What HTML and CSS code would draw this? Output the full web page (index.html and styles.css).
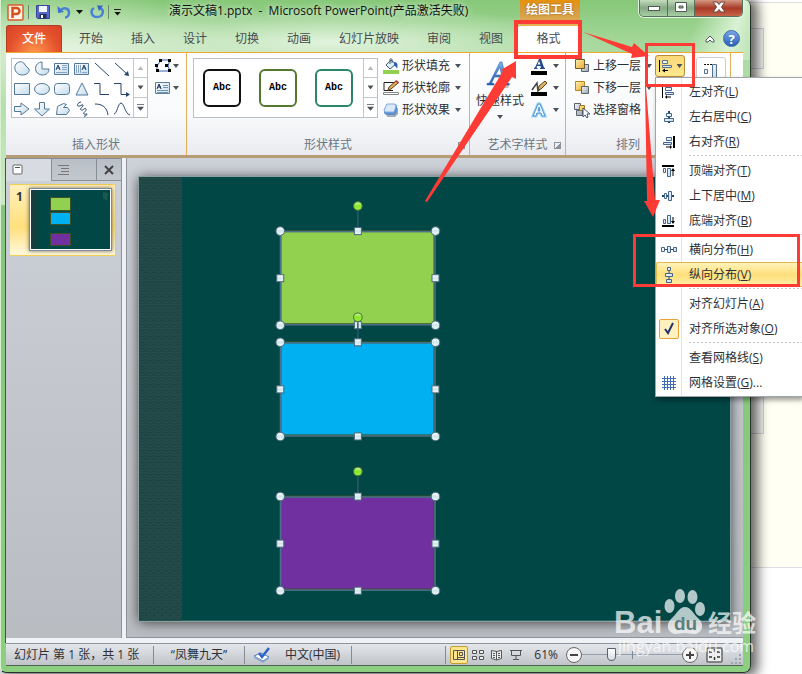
FILE: index.html
```html
<!DOCTYPE html>
<html lang="zh-CN">
<head>
<meta charset="utf-8">
<title>演示文稿1.pptx - Microsoft PowerPoint</title>
<link rel="stylesheet" href="styles.css">
</head>
<body>
<svg class="defs" aria-hidden="true">
  <defs>
    <linearGradient id="ice" x1="0" y1="0" x2="1" y2="1"><stop offset="0" stop-color="#fff"/><stop offset="1" stop-color="#c3dcec"/></linearGradient>
    <linearGradient id="gold" x1="0" y1="0" x2="1" y2="1"><stop offset="0" stop-color="#fff0b0"/><stop offset="1" stop-color="#e9a92c"/></linearGradient>
    <linearGradient id="steel" x1="0" y1="0" x2="1" y2="1"><stop offset="0" stop-color="#f4f6f8"/><stop offset="1" stop-color="#98a2ad"/></linearGradient>
    <linearGradient id="blue" x1="0" y1="0" x2="0" y2="1"><stop offset="0" stop-color="#7fb4ea"/><stop offset="1" stop-color="#1f58ad"/></linearGradient>
    <linearGradient id="lime" x1="0" y1="0" x2="0" y2="1"><stop offset="0" stop-color="#d6f8a4"/><stop offset=".5" stop-color="#85e62a"/><stop offset="1" stop-color="#a4f04c"/></linearGradient>
    <linearGradient id="knob" x1="0" y1="0" x2="0" y2="1"><stop offset="0" stop-color="#fff"/><stop offset=".5" stop-color="#cfe6ea"/><stop offset="1" stop-color="#f2fbfc"/></linearGradient>
    <pattern id="weave" width="8" height="6" patternUnits="userSpaceOnUse"><rect width="8" height="6" fill="#1e4645"/><path d="M0 1l4 1 4-1M0 4l3 1 5-1" stroke="#284e4c" fill="none"/><path d="M2 3h2M6 5h2" stroke="#183f3e"/></pattern>
    <symbol id="selection" viewBox="-8 -34 170 136" overflow="visible">
      <path d="M77.500-20V0" stroke="#2f5872" stroke-width="1.500"/>
      <rect x=".5" y=".5" width="154" height="93" fill="none" stroke="#49708c" stroke-width="1.500"/>
      <g fill="url(#knob)" stroke="#4d6b7d">
        <circle cx="0" cy="0" r="4.300"/><circle cx="155" cy="0" r="4.300"/><circle cx="0" cy="94" r="4.300"/><circle cx="155" cy="94" r="4.300"/>
        <rect x="74" y="-3.500" width="7" height="7"/><rect x="74" y="90.500" width="7" height="7"/><rect x="-3.500" y="43.500" width="7" height="7"/><rect x="151.500" y="43.500" width="7" height="7"/>
      </g>
      <circle cx="77.500" cy="-25" r="4.300" fill="url(#lime)" stroke="#4c7a35"/>
    </symbol>
  </defs>
</svg>
<div class="desktop">
  <div class="behind"><i></i><i></i></div>
  <main class="window">
    <header class="titlebar">
      <div class="quick">
        <svg width="17" height="17" viewBox="0 0 17 17"><rect x="1" y="1" width="15" height="15" rx="1" fill="#fff4ea" stroke="#d95b2b" stroke-width="1.500"/><path d="M5.500 14V4h4a2.800 2.800 0 0 1 0 6h-3" fill="none" stroke="#d8501e" stroke-width="2.500"/></svg>
        <span class="bar"></span>
        <button aria-label="保存"><svg width="14" height="14" viewBox="0 0 14 14"><path d="M.5.500h13v13h-12l-1-1z" fill="#5667c9" stroke="#38459b"/><path d="M3 1h8v6H3z" fill="#f3f6ff"/><path d="M3.500 9h7v4.500h-7z" fill="#22305f"/><path d="M5 10h2v3H5z" fill="#fff"/></svg></button>
        <button aria-label="撤消"><svg width="14" height="14" viewBox="0 0 14 14"><path d="M3 5.500c4-4 9-2 9 2 0 3-2 5-4 5" fill="none" stroke="#4a80d6" stroke-width="2.500"/><path d="M.5 1l.5 7 6-1z" fill="#3d74cf"/></svg></button>
        <i class="caret dark"></i>
        <button aria-label="恢复"><svg width="14" height="14" viewBox="0 0 14 14"><path d="M4 3C0 5 1 12 7 12s8-7 3-9" fill="none" stroke="#4b82d8" stroke-width="2.500"/><path d="M7 .5h6L9 6z" fill="#3368c2"/></svg></button>
        <span class="bar"></span>
        <span class="more"><i class="caret dark"></i></span>
      </div>
      <h1>演示文稿1.pptx&nbsp; -&nbsp; Microsoft PowerPoint(产品激活失败)</h1>
      <div class="context">绘图工具</div>
      <div class="controls">
        <button aria-label="最小化"><svg width="14" height="12"><rect x="1.500" y="5.500" width="11" height="4" fill="#fff" stroke="#4e5b52"/></svg></button>
        <button aria-label="最大化"><svg width="14" height="12"><path d="M1.500 1.500h11v9h-11zM5 5v2h4V5z" fill="#fff" fill-rule="evenodd" stroke="#4e5b52"/></svg></button>
        <button aria-label="关闭" class="close"><svg width="14" height="12"><path d="M1 1h4l2 2.500L9 1h4L9.500 6l3.500 5H9L7 8.500 5 11H1l3.500-5z" fill="#fff" stroke="#6b4640"/></svg></button>
      </div>
    </header>
    <nav class="tabs">
      <button class="file">文件</button>
      <button>开始</button><button>插入</button><button>设计</button><button>切换</button><button>动画</button><button>幻灯片放映</button><button>审阅</button><button>视图</button><button class="active">格式</button>
      <div class="help">
        <button aria-label="折叠功能区"><svg width="10" height="8"><path d="M1 5l4-4 4 4v2H7L5 5 3 7H1z" fill="#fff" stroke="#4b5d58"/></svg></button>
        <button aria-label="帮助" class="q">?</button>
      </div>
    </nav>
    <section class="ribbon">
      <div class="group insert">
        <div class="body">
          <div class="gallery">
            <div class="shapes">
              <svg viewBox="0 0 20 20"><path d="M4 5c4-4 8-2 9 1l4 4c1 4-3 6-7 6C4 16 1 9 4 5z"/></svg>
              <svg viewBox="0 0 20 20"><path d="M10 3v7h7c0 4-3 6-7 6a6.500 6.500 0 1 1 0-13z"/></svg>
              <svg viewBox="0 0 20 20"><path d="M2.500 4.500h14v11h-14z"/><path d="M4 11l2-5 2 5M5 9h3" class="ink"/><path d="M10 6.500h5M10 8.500h5M10 10.500h5M4 13.500h11" class="line"/></svg>
              <svg viewBox="0 0 20 20"><path d="M2.500 4.500h14v11h-14z"/><path d="M10 11l2-5 2 5M11 9h3" class="ink"/><path d="M4.500 6v8M6.500 6v8M8.500 6v8M10 13.500h5" class="line"/></svg>
              <svg viewBox="0 0 20 20"><path d="M3 4l14 13" class="ink"/></svg>
              <svg viewBox="0 0 20 20"><path d="M3 4l12 11" class="ink"/><path d="M17 17l-5-1 4-4z" class="solid"/></svg>
              <svg viewBox="0 0 20 20"><path d="M2.500 4.500h15v11h-15z"/></svg>
              <svg viewBox="0 0 20 20"><ellipse cx="10" cy="10" rx="7.500" ry="5.500"/></svg>
              <svg viewBox="0 0 20 20"><rect x="2.500" y="4.500" width="15" height="11" rx="3"/></svg>
              <svg viewBox="0 0 20 20"><path d="M10 4l6 12H4z"/></svg>
              <svg viewBox="0 0 20 20"><path d="M2 4.500h6v11h9" class="ink"/></svg>
              <svg viewBox="0 0 20 20"><path d="M2 4.500h7v11h7" class="ink"/><path d="M18 15.500l-4-2.500v5z" class="solid"/></svg>
              <svg viewBox="0 0 20 20"><path d="M2.500 7.500H9V4l8 6-8 6v-3.500H2.500z"/></svg>
              <svg viewBox="0 0 20 20"><path d="M7.500 3.500h5V10h5L10 17 2.500 10h5z"/></svg>
              <svg viewBox="0 0 20 20"><path d="M4.500 15.500l1-8 6-3 3 1-3 3h4l2 3-3 4z"/></svg>
              <svg viewBox="0 0 20 20"><path d="M9 3c-2 0-5 3-3 4s4-2 5-1-4 4-2 5 4-3 5-1-4 4-2 5 3-1 3 0-2 3-3 2" class="ink"/></svg>
              <svg viewBox="0 0 20 20"><path d="M3 5c7 0 12 3 13 11" class="ink"/></svg>
              <svg viewBox="0 0 20 20"><path d="M2 15C5 15 6 4 9 4s4 11 9 12" class="ink"/></svg>
            </div>
            <div class="scroll"><button aria-label="上一行"><i class="caret up"></i></button><button aria-label="下一行"><i class="caret"></i></button><button aria-label="更多"><i class="caret lined"></i></button></div>
          </div>
          <div class="stack tight">
            <button><svg width="17" height="16" viewBox="0 0 17 16"><path d="M2 8l4-6h9l-2 6 2 5H2z" fill="#fff" stroke="#2f5fb5"/><path d="M0 6h3v3H0zM4 1h3v3H4zM13 1h3v3h-3zM10 6h3v3h-3zM13 11h3v3h-3zM1 11h3v3H1z" fill="#000"/></svg><i class="caret"></i></button>
            <button><svg width="17" height="16" viewBox="0 0 17 16"><path d="M.5 2.500h14v11H.5z" fill="url(#ice)" stroke="#5d7e9d"/><path d="M2 9l2-5 2 5M3 7h3" stroke="#17294c" fill="none"/><path d="M8 5.500h5M8 7.500h5M2 10.500h11M2 12.500h11" stroke="#7494b2"/></svg><i class="caret"></i></button>
          </div>
        </div>
        <h2>插入形状</h2>
      </div>
      <div class="group styles">
        <div class="body">
          <div class="gallery">
            <div class="samples"><button class="s-black">Abc</button><button class="s-olive">Abc</button><button class="s-teal">Abc</button></div>
            <div class="scroll"><button aria-label="上一行"><i class="caret up"></i></button><button aria-label="下一行"><i class="caret"></i></button><button aria-label="更多"><i class="caret lined"></i></button></div>
          </div>
          <div class="stack">
            <button><svg width="16" height="16" viewBox="0 0 16 16"><path d="M3 7l5-5 5 4-6 5z" fill="url(#ice)" stroke="#3d5677"/><path d="M7 6V1.500c0-1 2-1 2 0V5" fill="none" stroke="#3d5677"/><path d="M11 4c4 0 4 3 3 7-1-3-2-3-3-3z" fill="#2c62ad"/><path d="M0 12h16v4H0z" fill="#92d050"/></svg>形状填充<i class="caret"></i></button>
            <button><svg width="16" height="16" viewBox="0 0 16 16"><path d="M1 2.500h11M1 2.500v8h9" fill="none" stroke="#222"/><path d="M5 10l1-3 7-6 2 2-7 6z" fill="#dfad55" stroke="#644420"/><path d="M12 1l1-1 3 2-1 2z" fill="#b43d3d"/><path d="M.5 12.500h15v2H.5z" fill="#fff" stroke="#888"/></svg>形状轮廓<i class="caret"></i></button>
            <button><svg width="16" height="16" viewBox="0 0 16 16"><path d="M3 6h12v6l-3 3H4z" fill="#a4abb5"/><path d="M1 8l3-6h9l1 2v6l-2 3H3l-2-2z" fill="#5c8fd2"/><path d="M4 2h8l1 2-2 6H2L1 8z" fill="#d9e9fa" stroke="#86aada"/></svg>形状效果<i class="caret"></i></button>
          </div>
        </div>
        <h2>形状样式</h2><i class="launch"></i>
      </div>
      <div class="group art">
        <div class="body">
          <button class="big"><svg width="30" height="34" viewBox="0 0 30 34"><path d="M17 25l9-1-3 5h-7z" fill="#999" opacity=".6"/><path d="M2 26v-1.500l2.500-.5L15 3h2l5 21 2 .5V26h-8v-1.500l2.500-.5-1.500-6H9.500l-3 6 2.500.5V26zM10.500 16h6L15 8z" fill="url(#blue)" stroke="#2a61b4" stroke-width=".6" fill-rule="evenodd"/></svg>快速样式<i class="caret"></i></button>
          <div class="stack tight">
            <button><svg width="17" height="17" viewBox="0 0 17 17"><path d="M3 11v-1l1-.5L8 1h2l3 8.500 1 .5v1H9v-1l1-.5L9.500 8H6L5.500 9.500l1 .5v1zM6.500 6.500h3L8 3z" fill="#214a8b" fill-rule="evenodd"/><path d="M0 13h16v4H0z"/></svg><i class="caret"></i></button>
            <button><svg width="17" height="17" viewBox="0 0 17 17"><path d="M1 10L6 3l1 8 2-2" fill="none" stroke="#444" stroke-width="1.500"/><path d="M7 10l1-4 6-5 2 2-6 6z" fill="#ddb05d" stroke="#644420"/><path d="M0 12h16v4H0z"/></svg><i class="caret"></i></button>
            <button><svg width="17" height="17" viewBox="0 0 17 17"><path d="M2 14L7 2h2l5 12h-3l-1-3H6l-1 3z" fill="#fff" stroke="#9ad3f4" stroke-width="3"/><path d="M2 14L7 2h2l5 12h-3l-1-3H6l-1 3zM7 9h2L8 5z" fill="#eef8ff" stroke="#4e93ce"/></svg><i class="caret"></i></button>
          </div>
        </div>
        <h2>艺术字样式</h2><i class="launch"></i>
      </div>
      <div class="group arrange">
        <div class="body">
          <div class="stack">
            <button><svg width="16" height="16" viewBox="0 0 16 16"><path d="M7.500 6.500h7v7h-7z" fill="url(#steel)" stroke="#59636d"/><path d="M1.500 1.500h9v9h-9z" fill="url(#gold)" stroke="#6e5a2b"/></svg>上移一层<i class="caret"></i></button>
            <button><svg width="16" height="16" viewBox="0 0 16 16"><path d="M1.500 1.500h9v9h-9z" fill="url(#gold)" stroke="#b78524"/><path d="M7.500 6.500h7v7h-7z" fill="url(#steel)" stroke="#59636d"/></svg>下移一层<i class="caret"></i></button>
            <button><svg width="16" height="16" viewBox="0 0 16 16"><path d="M.5 1.500h6v6h-6zM2.500 8.500h6v5h-6z" fill="url(#steel)" stroke="#59636d"/><path d="M5.500 3.500h5v5h-5z" fill="url(#gold)" stroke="#a57928"/><path d="M9 6v9l2-2 2 3 1-1-1-3h3z" fill="#fff" stroke="#415879"/></svg>选择窗格</button>
          </div>
          <button class="align" aria-label="对齐"><svg width="16" height="16" viewBox="0 0 16 16"><path d="M1 2h1v12H1z"/><path d="M4.500 2.500h5v3h-5zM4.500 7.500h9v2h-9z" fill="url(#ice)" stroke="#54718f"/><path d="M4 12.500l3-2v4zM6 12h4v1H6z"/></svg><i class="caret"></i></button>
          <button class="combine" aria-label="组合"><svg width="16" height="18" viewBox="0 0 16 18"><path d="M1 2.500h9" fill="none" stroke="#111" stroke-dasharray="2 1"/><path d="M1.500 7.500h3v4h-3zM9.500 2.500h4v14h-4z" fill="url(#ice)" stroke="#54718f"/></svg></button>
        </div>
        <h2>排列</h2>
      </div>
      <div class="group rest"></div>
    </section>
    <section class="work">
      <aside class="pane">
        <div class="panetabs">
          <button class="on" aria-label="幻灯片"><svg width="12" height="12"><rect x="1" y="1" width="9" height="9" rx="1" fill="#fff" stroke="#666"/><path d="M3 3.500h5" stroke="#555"/></svg></button>
          <button aria-label="大纲"><svg width="12" height="12"><path d="M1 1.500h11M4 4.500h8M4 7.500h8M1 10.500h11" stroke="#777"/></svg></button>
          <button aria-label="关闭"><svg width="12" height="12"><path d="M2 2l8 8M10 2l-8 8" stroke="#444" stroke-width="2"/></svg></button>
        </div>
        <div class="thumb"><b>1</b>
          <svg viewBox="0 0 79 59"><path fill="#004746" d="M0 0h79v59H0z"/><path fill="#153f3e" d="M0 0h6v59H0z"/><path d="M72 2l5 1-1 8-4-3z" fill="#1c5a50"/><g stroke="#3c5127"><path fill="#92d050" d="M19.500 7.500h20v13h-20z"/><path fill="#00b0f0" d="M19.500 22.500h20v12h-20z"/><path fill="#7030a0" d="M19.500 43.500h20v12h-20z"/></g></svg>
        </div>
      </aside>
      <div class="canvas">
        <svg class="slide" viewBox="0 0 590 443">
          <path fill="#004746" d="M0 0h590v443H0z"/><path fill="url(#weave)" d="M0 0h43v443H0z"/>
          <g stroke="#3b5222" stroke-width="2"><rect x="141" y="54" width="154" height="93" fill="#92d050"/><rect x="141" y="165" width="154" height="93" fill="#00b0f0"/><rect x="141" y="319" width="154" height="93" fill="#7030a0"/></g>
          <use href="#selection" x="133" y="20" width="170" height="136"/>
          <use href="#selection" x="133" y="131" width="170" height="136"/>
          <use href="#selection" x="133" y="285" width="170" height="136"/>
        </svg>
      </div>
    </section>
    <footer class="status">
      <span class="cell pages">幻灯片 第 1 张，共 1 张</span>
      <span class="cell theme">“凤舞九天”</span>
      <span class="cell lang"><svg width="18" height="16" viewBox="0 0 18 16"><path d="M1 9l7-3 8 4-6 4z" fill="#fff" stroke="#5b7cb5"/><path d="M1 9v2l9 5 6-4v-2l-6 4z" fill="#8da7d0"/><path d="M6 6l3 4 7-9" fill="none" stroke="#2d63c8" stroke-width="2.500"/></svg>中文(中国)</span>
      <div class="views">
        <button class="on" aria-label="普通视图"><svg width="14" height="12"><path d="M1.500 1.500h11v9h-11zM5.500 1v10M7.500 3.500h3v3h-3zM5 8.500h7" fill="none" stroke="#555"/></svg></button>
        <button aria-label="浏览"><svg width="14" height="12"><path d="M1.500 1.500h4v3h-4zM8.500 1.500h4v3h-4zM1.500 7.500h4v3h-4zM8.500 7.500h4v3h-4z" fill="#eee" stroke="#555"/></svg></button>
        <button aria-label="阅读"><svg width="14" height="12"><path d="M1.500 1.500l5 1 5-1v8l-5 1.500-5-1.500zM6.500 2v9M3 4.500h2M3 6.500h2M3 8.500h2M8 4.500h2M8 6.500h2M8 8.500h2" fill="#eee" stroke="#555"/></svg></button>
        <button aria-label="放映"><svg width="14" height="12"><path d="M1 1.500h12M2.500 2v4.500h9V2M7 6v4M4 10.500h6" fill="none" stroke="#555"/></svg></button>
      </div>
      <label class="pct" for="zoom">61%</label>
      <button class="round" aria-label="缩小"><svg width="14" height="14"><path d="M3 7h8" stroke="#444" stroke-width="2"/></svg></button>
      <input id="zoom" type="range" min="0" max="100" value="28">
      <button class="round" aria-label="放大"><svg width="14" height="14"><path d="M3 7h8M7 3v8" stroke="#444" stroke-width="2"/></svg></button>
      <button class="fit" aria-label="适应窗口"><svg width="17" height="16"><rect x="1" y="1" width="15" height="14" rx="1" fill="#eee" stroke="#666" stroke-width="1.500"/><path d="M3 5h3M11 5h3M3 10h3M11 10h3M8.500 2v3M8.500 10v3" stroke="#333" stroke-width="1.500"/></svg></button>
      <svg class="grip" width="12" height="12"><path d="M8 1h2v2H8zM8 5h2v2H8zM4 5h2v2H4zM8 9h2v2H8zM4 9h2v2H4zM0 9h2v2H0z" fill="#9ba7b5"/></svg>
    </footer>
  </main>

  <div class="menu" role="menu">
    <button><svg viewBox="0 0 16 16"><path d="M1 2h1v12H1z"/><path class="b" d="M4.500 3.500h6v3h-6zM4.500 8.500h8v2h-8z"/><path d="M4 13l2-2v4zM6 12.500h4v1H6z"/></svg><span>左对齐(<u>L</u>)</span></button>
    <button><svg viewBox="0 0 16 16"><path d="M7 2h2v12H7z" fill="#24446f"/><path class="b" d="M5.500 4.500h5v3h-5zM3.500 9.500h9v3h-9z"/></svg><span>左右居中(<u>C</u>)</span></button>
    <button><svg viewBox="0 0 16 16"><path d="M12 2h2v12h-2z"/><path class="b" d="M5.500 3.500h5v3h-5zM2.500 8.500h8v2h-8z"/><path d="M11 13l-2-2v4zM5 12.500h4v1H5z"/></svg><span>右对齐(<u>R</u>)</span></button>
    <hr>
    <button><svg viewBox="0 0 16 16"><path d="M1 2h12v2H1z"/><path class="b" d="M2.500 5.500h2v4h-2zM6.500 5.500h3v8h-3z"/><path d="M12 5l-2 3h1.500v5h1V8H14z"/></svg><span>顶端对齐(<u>T</u>)</span></button>
    <button><svg viewBox="0 0 16 16"><path d="M1 7h12v2H1z" fill="#24446f"/><path class="b" d="M3.500 5.500h2v5h-2zM7.500 3.500h3v9h-3z"/></svg><span>上下居中(<u>M</u>)</span></button>
    <button><svg viewBox="0 0 16 16"><path d="M1 12h12v2H1z"/><path class="b" d="M2.500 6.500h2v4h-2zM6.500 2.500h3v8h-3z"/><path d="M12 11l-2-3h1.500V4h1v4H14z"/></svg><span>底端对齐(<u>B</u>)</span></button>
    <hr>
    <button><svg viewBox="0 0 16 16"><path d="M1 7h14v1H1z" fill="#24446f"/><path class="b" d="M.5 5.500h3v4h-3zM6.500 4.500h3v6h-3zM12.500 5.500h3v4h-3z"/></svg><span>横向分布(<u>H</u>)</span></button>
    <button class="hot"><svg viewBox="0 0 16 16"><path d="M7.500 1h1v14h-1z" fill="#24446f"/><path class="b" d="M6.500.500h3v3h-3zM4.500 6.500h7v3h-7zM5.500 12.500h5v3h-5z"/></svg><span>纵向分布(<u>V</u>)</span></button>
    <hr>
    <button><svg viewBox="0 0 16 16"></svg><span>对齐幻灯片(<u>A</u>)</span></button>
    <button><svg class="tick" viewBox="0 0 18 18"><path d="M5 9l3 4 5-10" fill="none" stroke="#24326b" stroke-width="2"/></svg><span>对齐所选对象(<u>O</u>)</span></button>
    <hr>
    <button><svg viewBox="0 0 16 16"></svg><span>查看网格线(<u>S</u>)</span></button>
    <button><svg viewBox="0 0 16 16"><path d="M3.500 1v14M6.500 1v14M9.500 1v14M12.500 1v14M1 3.500h14M1 6.500h14M1 9.500h14M1 12.500h14" stroke="#3f6cb4"/></svg><span>网格设置(<u>G</u>)...</span></button>
  </div>

  <svg class="notes" width="802" height="674" viewBox="0 0 802 674">
    <g fill="none" stroke="#ff3b36" stroke-width="4"><path d="M516 22h64v35h-64z"/><path d="M646.500 44.500h47v41h-47zM634.500 235.500h164v50h-164z" stroke-width="3"/></g>
    <g fill="#ff3b36"><path d="M425 201l78-130-2-1 15-9v18l-4-2-85 125z"/><path d="M583 32l49 15 2-4 15 13-18 2 1-4z"/><path d="M645 87h1l9 113h5l-7 17-9-16h3z"/></g>
    <g class="mark"><text x="614" y="633" class="bai">Bai</text><text x="708" y="632" class="jy">经验</text><text x="618" y="652" class="url">jingyan.baidu.com</text>
      <ellipse cx="669.500" cy="606" rx="5" ry="7"/><ellipse cx="680" cy="596" rx="5" ry="7"/><ellipse cx="692.500" cy="597" rx="5" ry="7"/><ellipse cx="700" cy="609" rx="5" ry="7"/>
      <path d="M685 607c6 0 9 8 14 12 6 6 3 14-4 15-4 0-7-1-10-1s-6 1-10 1c-7-1-10-9-4-15 5-4 8-12 14-12z"/></g>
    <text x="674" y="630" class="du">du</text>
  </svg>
</div>
</body>
</html>
```
FILE: styles.css
```css
* { box-sizing: border-box; }
body { margin: 0; overflow: hidden; font: 12px/16px "Open Sans", "Noto Sans CJK SC", sans-serif; color: #2d3035; background: #fff; }
button { font: inherit; color: inherit; border: 0; padding: 0; background: none; display: flex; align-items: center; }
h1, h2 { margin: 0; font-size: 12px; font-weight: 400; white-space: nowrap; }
svg { flex: none; display: block; }
.defs { position: absolute; width: 0; height: 0; }
.desktop { position: relative; min-height: 100vh; padding-right: 51px; display: flex; overflow: hidden; }
.behind { position: absolute; top: 2px; right: 0; width: 70px; height: 566px; background: #fffff4; border: solid #dcdce4; border-width: 1px 0; }
.behind i { position: absolute; left: 0; top: 25px; width: 32px; height: 41px; border: 1px solid #d0d0da; background: #f6f6f4; }
.behind i + i { top: 390px; }

.window { position: relative; flex: 1; min-width: 0; display: flex; flex-direction: column; padding: 0 7px 6px 5px; margin-bottom: 1px; border: solid #26332a; border-width: 0 1px 1px 0; border-left: 1px solid #d8efd0; border-radius: 0 6px 7px 6px;
  background: radial-gradient(ellipse 280px 34px at 330px 42px, #f0faedcc, #fff0), radial-gradient(ellipse 170px 60px at 60px 50px, #e5f4e0, #fff0), linear-gradient(110deg, #fff0 660px, #d9f2d4 700px, #fff0 740px) 0 0 / 100% 60px no-repeat, linear-gradient(#86c878, #a9d99f 50px, #cdeac6 204px, #86c57d 206px, #8ccf80);
  box-shadow: 4px 1px 12px 3px #0009; }

.titlebar { display: grid; grid-template-columns: 163px 351px 60px 1fr; height: 25px; }
.titlebar h1 { color: #111; padding-top: 3px; text-shadow: 0 0 6px #fff; }
.quick { display: flex; align-items: center; gap: 7px; padding: 0 0 1px 1px; }
.bar { width: 1px; height: 14px; background: #6c8a6b; margin: 0 0 0 -3px; }
.quick > .caret { margin: 0 0 0 -2px; }
.more { border-top: 1px solid #222; padding-top: 2px; margin-left: -2px; }
.more .caret { display: block; }
.context { background: linear-gradient(#e8920d, #d79a3c 40%, #dfb05d); color: #fff; font-weight: 700; display: flex; justify-content: center; padding-top: 2px; text-shadow: 0 0 2px #8a5200; }
.controls { justify-self: end; display: grid; grid-template-columns: 28px 27px 47px; height: 17px; border: 1px solid #56715b; border-top: 0; border-radius: 0 0 5px 5px; overflow: hidden; box-shadow: 0 0 0 1px #e2f3df; }
.controls button { justify-content: center; padding-bottom: 2px; background: linear-gradient(#c4ddbd, #85a983 50%, #a9cda3); border-right: 1px solid #56715b; }
.controls .close { background: linear-gradient(#d59a84, #a83a26 50%, #c7634a); border: 0; }

.caret { flex: none; width: 6px; height: 4px; background: #4b5159; clip-path: polygon(0 0, 100% 0, 50% 100%); }
.caret.dark { background: #111; width: 7px; }
.caret.up { background: #b4b8be; clip-path: polygon(0 100%, 100% 100%, 50% 0); }
.caret.lined { width: 7px; height: 7px; clip-path: polygon(0 0, 100% 0, 100% 1px, 0 1px, 0 3px, 100% 3px, 50% 100%, 0 3px); }

.tabs { display: flex; height: 27px; color: #454b50; }
.tabs > button { padding: 0 14px; white-space: nowrap; }
.tabs .file { width: 56px; margin-right: 3px; justify-content: center; color: #fff; font-weight: 500; border: 1px solid #b13c1c; border-bottom: 0; border-radius: 3px 3px 0 0; background: radial-gradient(ellipse at 50% 110%, #ff9a4f, #e4512c 65%, #d8432a); }
.tabs .active { width: 63px; justify-content: center; padding: 0; background: #fff; border: 1px solid #f0b040; border-bottom: 0; border-radius: 3px 3px 0 0; }
.help { margin-left: auto; display: flex; align-items: center; gap: 8px; padding-right: 3px; }
.help .q { width: 17px; height: 17px; border-radius: 50%; justify-content: center; color: #fff; font-size: 13px; font-weight: 700; background: linear-gradient(#76a5e4, #2b5fb6); border: 1px solid #3c68ad; }

.ribbon { display: flex; height: 106px; border-top: 1px solid #f0a830; border-bottom: 3px solid #b79c78; background: linear-gradient(#fff, #f9fafb 60%, #e9ebef); }
.group { position: relative; display: flex; flex-direction: column; border-right: 1px solid #e6ae58; }
.insert { width: 181px; } .styles { width: 283px; } .art { width: 96px; } .arrange { width: 165px; }
.rest { flex: 1; border: 0; }
.group h2 { text-align: center; color: #6b7684; padding-bottom: 2px; }
.body { flex: 1; display: flex; align-items: flex-start; padding: 2px 5px 0; }
.gallery { display: flex; height: 60px; margin-top: 3px; border: 1px solid #bcc0c6; background: #fff; }
.shapes { display: grid; grid-template-columns: repeat(6, 20px); grid-auto-rows: 20px; width: 121px; }
.shapes svg { width: 20px; height: 20px; fill: url(#ice); stroke: #52789b; }
.shapes .ink { fill: none; stroke: #24446f; }
.shapes .line { fill: none; stroke: #8aa5bf; }
.shapes .solid { fill: #24446f; stroke: none; }
.scroll { width: 14px; display: grid; grid-template-rows: repeat(3, 1fr); }
.scroll button { justify-content: center; border-left: 1px solid #c4c8ce; border-bottom: 1px solid #c4c8ce; }
.scroll button:last-child { border-bottom: 0; }
.stack { display: grid; grid-auto-rows: 22px; margin-left: 6px; }
.stack button { gap: 3px; white-space: nowrap; }
.stack .caret { margin-left: 2px; }
.stack.tight .caret { margin-left: 0; }
.insert .stack { margin-left: 7px; }
.insert .stack button { gap: 1px; }
.styles .body { padding-left: 6px; }
.samples { width: 169px; display: flex; gap: 18px; padding: 10px 9px; }
.samples button { width: 38px; height: 38px; flex: none; justify-content: center; border: 2px solid #111; border-radius: 6px; background: #fff; color: #000; font: 700 10px/12px "Liberation Mono", monospace; }
.samples .s-olive { border-color: #55782f; }
.samples .s-teal { border-color: #2b8668; }
.launch { position: absolute; right: 4px; bottom: 6px; width: 7px; height: 7px; border: solid #8b929b; border-width: 1px 0 0 1px; background: linear-gradient(135deg, #fff0 50%, #8b929b 50%); }
.styles .stack { margin-left: 5px; }
.big { flex-direction: column; width: 50px; white-space: nowrap; padding-top: 4px; }
.big .caret { margin-top: 6px; }
.art .stack { margin-left: 6px; }
.art .stack button { gap: 5px; }
.arrange .body { padding-left: 8px; }
.arrange .stack { margin-left: 0; width: 77px; }
.align { width: 30px; height: 22px; margin-left: 4px; gap: 3px; justify-content: center; border: 1px solid #b98d35; border-radius: 3px; background: linear-gradient(#fbd878, #ffe98e); flex: none; }
.combine { width: 30px; height: 28px; margin: 2px 0 0 11px; justify-content: center; border: 1px solid #c9cdd3; border-radius: 3px; background: #fff; flex: none; }
.arrange h2 { padding-right: 40px; }

.work { flex: 1; display: grid; grid-template-columns: 116px 1fr; gap: 4px; padding-bottom: 5px; background: #f0f2f5; border-left: 1px solid #3e5744; margin-left: -1px; }
.pane { background: linear-gradient(#cdd1d8, #b9bcc1); border-right: 1px solid #8d949d; }
.panetabs { display: grid; grid-template-columns: 45px 45px 1fr; height: 23px; border-top: 1px solid #868f98; }
.panetabs button { justify-content: center; background: linear-gradient(#b9bfc7, #c3c8ce); border: solid #868f98; border-width: 0 0 1px 1px; }
.panetabs .on { background: #d8dce2; border: 0; justify-content: flex-start; padding-left: 6px; }
.panetabs button:nth-child(2) { justify-content: flex-start; padding-left: 5px; }
.thumb { display: flex; justify-content: space-between; margin: 3px 5px 0 3px; padding: 3px 3px 4px 6px; border: 1px solid #f3cf55; border-radius: 2px; background: linear-gradient(#fff1bd, #ffe07d 60%, #fff8dc); }
.thumb b { font: 700 12px/18px "Noto Sans", sans-serif; }
.thumb svg { width: 83px; border: 1px solid #8088a0; padding: 1px; background: #fff; box-shadow: 0 0 4px #0008; }
.canvas { padding: 19px 13px 0 12px; border-left: 1px solid #8d949d; border-bottom: 1px solid #8d949d; background: linear-gradient(#cdd1d8, #b9bcc1); }
.slide { width: 100%; outline: 1px solid #8ba09f; box-shadow: 0 1px 12px #000b; }

.status { display: flex; align-items: center; height: 23px; border-top: 1px solid #8d949d; background: linear-gradient(#e4e7eb, #c0c3c8); border-bottom: 1px solid #4d6450; white-space: nowrap; }
.cell { display: flex; align-items: center; gap: 14px; height: 18px; border-right: 1px solid #858b92; }
.pages { width: 148px; padding-left: 8px; } .theme { width: 91px; justify-content: center; } .lang { width: 107px; padding-left: 8px; }
.views { display: flex; margin-left: auto; border-left: 1px solid #858b92; padding-left: 4px; gap: 1px; }
.views button { width: 18px; height: 18px; justify-content: center; }
.views .on { border: 1px solid #c99b35; border-radius: 2px; background: #ffe58b; }
.pct { margin: 0 8px 0 9px; }
.round { width: 16px; height: 16px; justify-content: center; flex: none; border: 1px solid #666; border-radius: 50%; background: #f6f6f6; }
#zoom { appearance: none; width: 100px; height: 14px; margin: 0; background: linear-gradient(#7f8994, #7f8994) center / 1px 8px no-repeat, linear-gradient(#929eab, #929eab) center / 100% 1px no-repeat; }
#zoom::-webkit-slider-thumb { appearance: none; width: 9px; height: 13px; background: linear-gradient(#fff, #d6dae0); border: 1px solid #59636e; border-radius: 1px 1px 5px 5px; }
.fit { margin: 0 8px 0 8px; }
.grip { align-self: flex-end; }

.menu { position: absolute; left: 655px; top: 77px; right: 0; padding: 1px 0; border: 1px solid #a0a6ad; border-right: 0; background: linear-gradient(90deg, #fff 25px, #e1e4e8 25px, #e1e4e8 26px, #fff 26px); box-shadow: 2px 3px 5px #0006; }
.menu button { width: 100%; height: 25px; gap: 12px; padding: 1px 0 0 5px; white-space: nowrap; }
.menu svg { width: 16px; height: 16px; }
.menu .b { fill: url(#ice); stroke: #46658c; }
.menu .tick { width: 20px; height: 20px; margin: 0 -2px; background: #fff0c0; border: 1px solid #e9a13a; border-radius: 2px; }
.menu hr { height: 1px; margin: 1px 0 2px 33px; border: 0; background: repeating-linear-gradient(90deg, #c4c8cd 0 2px, #fff 2px 4px); }
.menu .hot { border: 1px solid #e5b94d; border-right: 0; border-radius: 2px 0 0 2px; background: linear-gradient(#fff3ba, #ffdf7b 50%, #fff0a8); padding: 1px 0 0 4px; }
.notes { position: absolute; left: 0; top: 0; pointer-events: none; }
.mark { fill: #fff; opacity: .7; }
.bai { font: 700 31px "Liberation Sans", sans-serif; }
.jy { font: 700 24px "Noto Sans CJK SC", sans-serif; }
.url { font: 16px "Open Sans", sans-serif; }
.du { font: 700 19px "Liberation Sans", sans-serif; fill: #5d7f7e; }
```
